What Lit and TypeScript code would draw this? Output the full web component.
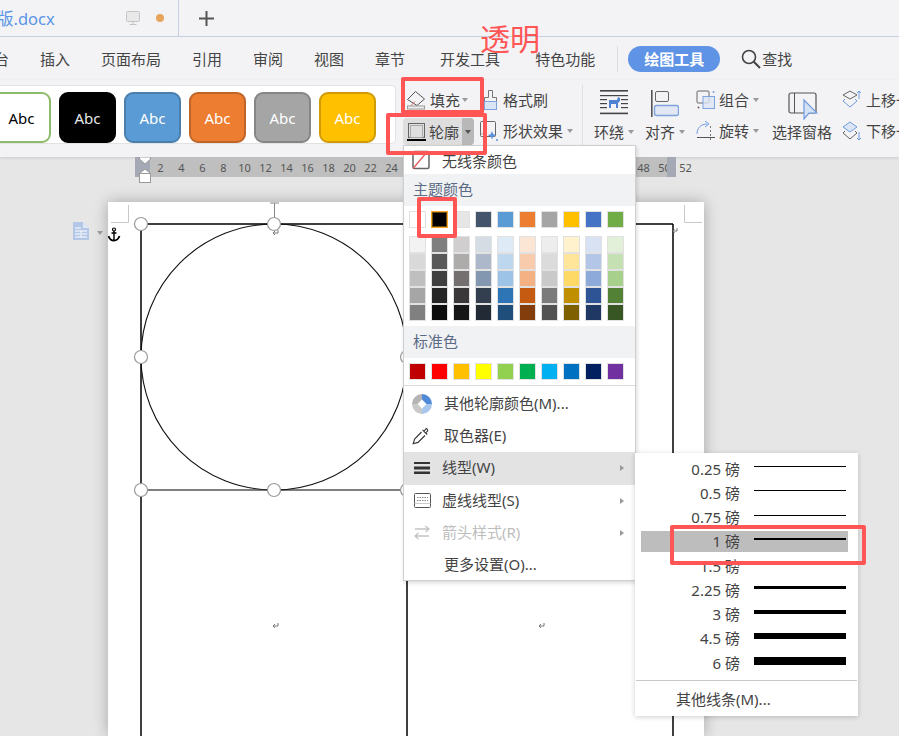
import { LitElement, html, svg, css } from "lit";
import { customElement } from "lit/decorators.js";

const THEME = ["#ffffff", "#000000", "#e7e6e6", "#44546a", "#5b9bd5", "#ed7d31", "#a5a5a5", "#ffc000", "#4472c4", "#70ad47"];
const SHADES = [
  ["#f2f2f2", "#7f7f7f", "#d0cece", "#d6dce4", "#deebf6", "#fbe5d5", "#ededed", "#fff2cc", "#d9e2f3", "#e2efd9"],
  ["#d9d9d9", "#595959", "#aeabab", "#adb9ca", "#bdd7ee", "#f7cbac", "#dbdbdb", "#fee599", "#b4c6e7", "#c5e0b3"],
  ["#bfbfbf", "#404040", "#757070", "#8497b0", "#9dc3e6", "#f4b183", "#c9c9c9", "#ffd965", "#8eaadb", "#a8d08d"],
  ["#a6a6a6", "#262626", "#3a3838", "#333f4f", "#2e75b5", "#c55a11", "#7b7b7b", "#bf8f00", "#2f5496", "#538135"],
  ["#808080", "#0d0d0d", "#161616", "#222a35", "#1e4e79", "#833c0b", "#525252", "#7f6000", "#1f3864", "#375623"],
];
const STANDARD = ["#c00000", "#ff0000", "#ffc000", "#ffff00", "#92d050", "#00b050", "#00b0f0", "#0070c0", "#002060", "#7030a0"];
const WEIGHTS = [
  { label: "0.25 磅", h: 1 },
  { label: "0.5 磅", h: 1 },
  { label: "0.75 磅", h: 1 },
  { label: "1 磅", h: 2 },
  { label: "1.5 磅", h: 2 },
  { label: "2.25 磅", h: 3 },
  { label: "3 磅", h: 4 },
  { label: "4.5 磅", h: 6 },
  { label: "6 磅", h: 8 },
];
const CARDS = [
  { fill: "#ffffff", edge: "#8cbb6a", text: "#000000" },
  { fill: "#000000", edge: "#000000", text: "#e8e8e8" },
  { fill: "#5b9bd5", edge: "#4a7ead", text: "#ffffff" },
  { fill: "#ed7d31", edge: "#bf652a", text: "#ffffff" },
  { fill: "#a5a5a5", edge: "#868686", text: "#ffffff" },
  { fill: "#ffc000", edge: "#cf9c05", text: "#ffffff" },
];
const RULER = Array.from({ length: 26 }, (_, i) => (i + 1) * 2);

const caret = html`<span class="caret"></span>`;

const icons = {
  fill: html`<svg width="20" height="20" viewBox="0 0 20 20" fill="none"><path d="M9.500 1.500L18.500 9l-7.500 6.500L1.500 9.500z" stroke="#555"/><path d="M4 16.500l5-5" stroke="#e46a6a"/><rect x="1.500" y="16" width="17" height="3" fill="#efefef" stroke="#999"/></svg>`,
  painter: html`<svg width="15" height="22" viewBox="0 0 15 22" fill="none"><path d="M5.500 1.500h4v7h4v4h-12v-4h4z" stroke="#777"/><rect x="1.500" y="12.500" width="12" height="8" fill="#d9e4f5" stroke="#7fa3dd"/></svg>`,
  outline: html`<svg width="19" height="20" viewBox="0 0 19 20" fill="none"><rect x="1.500" y="1.500" width="16" height="14" stroke="#666"/><rect x="3.500" y="3.500" width="12" height="12" stroke="#aaa"/><rect x="0" y="17" width="19" height="2" fill="#000"/></svg>`,
  effect: html`<svg width="20" height="22" viewBox="0 0 20 22" fill="none"><rect x="1.500" y="1.500" width="15" height="15" rx="1" stroke="#666"/><path d="M2 15l6-7" stroke="#bbb"/><path d="M13 11l1.200 3 3 1.200-3 1.200-1.200 3-1.200-3-3-1.200 3-1.200z" fill="#5f93e0"/><circle cx="5" cy="19" r="1.200" fill="#5f93e0"/><circle cx="18" cy="20" r="1" fill="#5f93e0"/></svg>`,
  wrap: html`<svg width="28" height="25" viewBox="0 0 28 25"><g fill="#444"><rect x="0" y="0" width="28" height="1.600"/><rect x="0" y="5" width="28" height="1.200"/><rect x="0" y="9" width="7" height="1.200"/><rect x="21" y="9" width="7" height="1.200"/><rect x="0" y="13" width="7" height="1.200"/><rect x="21" y="13" width="7" height="1.200"/><rect x="0" y="17" width="7" height="1.200"/><rect x="21" y="17" width="7" height="1.200"/><rect x="0" y="22.600" width="28" height="1.600"/></g><path d="M9 10h8l1-3 2 1v3l-2 2v5h-2v-4h-5v4H9z" fill="#4f83d1"/></svg>`,
  align: html`<svg width="28" height="28" viewBox="0 0 28 28" fill="none"><rect x="0" y="0" width="1.600" height="27" fill="#555"/><rect x="4.500" y="1.500" width="13" height="10" rx="1.500" stroke="#666"/><rect x="3.500" y="15.500" width="24" height="10" rx="2" fill="#e1e8f4" stroke="#7fa3dd" stroke-width="1.400"/></svg>`,
  group: html`<svg width="20" height="20" viewBox="0 0 20 20" fill="none"><rect x="1" y="1" width="12" height="12" rx="1" stroke="#666"/><rect x="7" y="6.500" width="11.500" height="12" fill="#dbe5f5" fill-opacity=".8" stroke="#7fa3dd"/><circle cx="17.500" cy="2" r="1" fill="#7fa3dd"/><circle cx="2.500" cy="17.500" r="1" fill="#666"/></svg>`,
  rotate: html`<svg width="20" height="20" viewBox="0 0 20 20" fill="none"><path d="M1 13C1 7 5 3 11 3" stroke="#6f9be0"/><path d="M9 0l4 3-4 3" stroke="#6f9be0"/><path d="M1 16.500h18" stroke="#555"/><path d="M14.500 5v15" stroke="#777" stroke-dasharray="2 2"/></svg>`,
  pane: html`<svg width="30" height="28" viewBox="0 0 30 28" fill="none"><rect x="1" y="1" width="27" height="20" rx="2" stroke="#555" stroke-width="1.200"/><path d="M6.500 1v20" stroke="#555"/><path d="M16 8v19l5-6h8z" fill="#d5e2f6" stroke="#6f9be0" stroke-width="1.200"/></svg>`,
  up: html`<svg width="20" height="20" viewBox="0 0 20 20" fill="none"><path d="M8 1l7 4-7 4-7-4z" stroke="#666"/><path d="M3 9l-2 2 7 6 7-6-2-2" stroke="#6f9be0"/><path d="M17 9V1m-2 2l2-2 2 2" stroke="#6f9be0"/></svg>`,
  down: html`<svg width="20" height="20" viewBox="0 0 20 20" fill="none"><path d="M8 1l7 5-7 5-7-5z" fill="#dbe5f5" stroke="#6f9be0"/><path d="M3 10l-2 2 7 6 7-6-2-2" stroke="#666"/><path d="M17 11v8m-2-2l2 2 2-2" stroke="#6f9be0"/></svg>`,
  search: html`<svg width="20" height="20" viewBox="0 0 20 20" fill="none"><circle cx="8" cy="8" r="6.500" stroke="#444" stroke-width="1.600"/><path d="M12.800 12.800L19 19" stroke="#444" stroke-width="2"/></svg>`,
  monitor: html`<svg width="14" height="15" viewBox="0 0 14 15" fill="none"><rect x=".5" y=".5" width="13" height="10" rx="1" fill="#e8e8e8" stroke="#c4c4c4"/><path d="M7 11v2M3.500 13.500h7" stroke="#c4c4c4"/></svg>`,
  plus: html`<svg width="15" height="15" viewBox="0 0 15 15"><path d="M6.500 0h2v6.500H15v2H8.500V15h-2V8.500H0v-2h6.500z" fill="#555"/></svg>`,
  noline: html`<svg width="18" height="20" viewBox="0 0 18 20" fill="none"><rect x="1" y="1.500" width="16" height="17" rx="1.500" stroke="#666" stroke-width="1.500"/><path d="M1 18.500L15 2" stroke="#e25a5a" stroke-width="1.300"/></svg>`,
  wheel: html`<svg width="20" height="20" viewBox="0 0 20 20"><path d="M10 0a10 10 0 0 1 10 10h-5.500L10 5.500z" fill="#4f8ad8"/><path d="M20 10a10 10 0 0 1-10 10v-5.500l4.500-4.500z" fill="#a9c6ec"/><path d="M10 20A10 10 0 0 1 0 10h5.500l4.500 4.500z" fill="#c9c9c9"/><path d="M0 10A10 10 0 0 1 10 0v5.500L5.500 10z" fill="#b4b4b4"/></svg>`,
  dropper: html`<svg width="18" height="18" viewBox="0 0 18 18" fill="none" stroke="#333" stroke-width="1.100"><path d="M10.500 2.800l4.700 4.700M12 4.300l1.700-2.300c1-.9 2.300.4 1.900 1.900L13.700 6"/><path d="M9.500 5L2.600 12 1.200 16.800 6 15.400 13 8.500"/></svg>`,
  weight: html`<svg width="16" height="12" viewBox="0 0 16 12"><rect y="0" width="16" height="2" fill="#333"/><rect y="4.500" width="16" height="3" fill="#333"/><rect y="9.500" width="16" height="2.500" fill="#333"/></svg>`,
  dash: html`<svg width="17" height="15" viewBox="0 0 17 15" fill="none"><rect x=".5" y=".5" width="16" height="14" rx="1" stroke="#555"/><path d="M3 4.500h11M3 7.500h11" stroke="#888" stroke-dasharray="1.500 1"/><path d="M.5 10.500h16" stroke="#ccc"/></svg>`,
  arrows: html`<svg width="16" height="15" viewBox="0 0 16 15" fill="none" stroke="#c4c4c4" stroke-width="1.300"><path d="M1 4h14M11.500 1L15 4 11.500 7"/><path d="M15 11H1M4.500 8L1 11l3.500 3"/></svg>`,
  doc: html`<svg width="16" height="18" viewBox="0 0 16 18"><path d="M0 0h10l6 6v12H0z" fill="#b4c7e7"/><path d="M10 0v6h6" fill="#dfe8f6"/><path d="M2 6h6M2 9h12M2 12h5M9 12h5M2 15h12M8 9v6" stroke="#fff"/></svg>`,
  marker: html`<svg width="12" height="26" viewBox="0 0 12 26"><path d="M.5 0h11v2L6 7 .5 2z" fill="#fff" stroke="#999"/><path d="M6 12l5.500 4.500H.5z" fill="#fff" stroke="#999"/><rect x=".5" y="16.500" width="11" height="9" fill="#fff" stroke="#999"/></svg>`,
};

@customElement("app-root")
export class AppRoot extends LitElement {
  static styles = css`
    :host {
      display: block;
      position: relative;
      width: 899px;
      height: 736px;
      overflow: hidden;
      background: #e6e6e6;
      color: #444;
      font: 15px "Noto Sans", "Noto Sans CJK SC", sans-serif;
    }

    svg {
      display: block;
      flex: none;
    }

    /* title tabs */
    .tabs {
      display: flex;
      height: 36px;
      background: #f3f3f5;
      border-bottom: 1px solid #c5d0e0;
    }
    .tab {
      display: flex;
      align-items: center;
      width: 178px;
      border-right: 1px solid #c5d0e0;
      overflow: hidden;
      flex: none;
    }
    .tab-name {
      margin-left: -3px;
      width: 129px;
      color: #5b95e6;
      font-size: 16.500px;
      white-space: nowrap;
    }
    .tab-dot {
      width: 8px;
      height: 8px;
      margin-left: 16px;
      border-radius: 50%;
      background: #e8a35d;
    }
    .add {
      margin: 1px 0 0 20px;
      align-self: center;
    }

    /* menu row */
    .menubar {
      display: flex;
      align-items: center;
      gap: 31px;
      height: 43px;
      margin-left: -6px;
      background: #f3f3f5;
      white-space: nowrap;
    }
    .menubar .wide {
      margin-left: 4px;
    }
    .menu-rule {
      width: 1px;
      height: 26px;
      margin: 0 -21px 0 -9px;
      background: #dcdcdc;
    }
    .pill {
      padding: 0 16px;
      height: 26px;
      line-height: 26px;
      border-radius: 13px;
      background: #5f93e6;
      color: #fff;
      font-weight: 700;
    }
    .find {
      display: flex;
      align-items: center;
      gap: 1px;
      margin-left: -10px;
    }

    /* ribbon */
    .ribbon {
      position: relative;
      display: flex;
      height: 77px;
      padding-top: 5px;
      box-sizing: border-box;
      background: #f3f3f5;
      box-shadow: 0 1px 3px rgba(0, 0, 0, 0.12);
      white-space: nowrap;
    }
    .gallery {
      display: flex;
      gap: 8px;
      flex: none;
      box-sizing: border-box;
      width: 404px;
      height: 59px;
      margin-left: -8px;
      padding-top: 6px;
      background: #fff;
      border: 1px solid #e2e2e2;
      border-left: 0;
      border-radius: 0 5px 5px 0;
    }
    .card {
      display: flex;
      align-items: center;
      justify-content: center;
      box-sizing: border-box;
      width: 57px;
      height: 51px;
      border: 2px solid;
      border-radius: 9px;
      font-size: 15px;
    }
    .card:first-child {
      width: 59px;
    }
    .gallery-more {
      width: 6px;
      height: 1px;
      margin: 24px 0 0 2px;
      background: #888;
    }
    .small-tools {
      display: grid;
      grid-template-columns: 80px 99px;
      grid-template-rows: 31px 31px;
      flex: none;
      margin: -1px 0 0 7px;
    }
    .tool {
      display: flex;
      align-items: center;
      gap: 5px;
    }
    .caret {
      display: inline-block;
      flex: none;
      width: 0;
      height: 0;
      margin-left: 4px;
      border: 3.500px solid transparent;
      border-top: 4px solid #999;
      border-bottom: 0;
    }
    .tool .caret {
      margin-left: -2px;
    }
    .fill-tool {
      padding-left: 3px;
      gap: 4px;
    }
    .outline-tool {
      align-self: center;
      box-sizing: border-box;
      width: 71px;
      height: 27px;
      margin-top: 2px;
      padding-left: 4px;
      gap: 3px;
      border-radius: 4px;
      background: #dedede;
    }
    .outline-tool .more {
      display: flex;
      align-items: center;
      justify-content: center;
      align-self: stretch;
      width: 13px;
      margin-left: auto;
      border-radius: 0 4px 4px 0;
      background: #b8b8b8;
    }
    .outline-tool .caret {
      margin: 0;
      border-top-color: #555;
    }
    .effect-tool {
      margin-left: -4px;
      gap: 4px;
    }
    .effect-tool .caret {
      margin-left: 0;
    }
    .big-tools {
      display: flex;
      flex: none;
      border-left: 1px solid #e0e0e0;
      height: 62px;
      padding-left: 11px;
    }
    .big {
      display: flex;
      flex-direction: column;
      align-items: flex-start;
      flex: none;
      width: 51px;
      height: 62px;
    }
    .big-icon {
      height: 35px;
      margin-left: 6px;
      padding-top: 5px;
      box-sizing: border-box;
    }
    .big-label {
      display: flex;
      align-items: center;
      height: 23px;
    }
    .pair {
      display: grid;
      grid-template-rows: 31px 31px;
      flex: none;
      width: 76px;
      margin-top: -1px;
    }
    .pair .tool {
      gap: 3px;
    }
    .pair .caret {
      margin-left: 1px;
    }
    .pane {
      flex: none;
      width: 70px;
      display: flex;
      flex-direction: column;
      align-items: flex-start;
    }
    .pane .big-icon {
      margin-left: 16px;
      padding-top: 7px;
    }
    .moves {
      display: grid;
      grid-template-rows: 31px 31px;
      margin-top: -1px;
    }
    .moves .tool {
      gap: 4px;
    }

    /* ruler and document */
    .ruler {
      position: relative;
      display: flex;
      align-items: center;
      box-sizing: border-box;
      width: 560px;
      height: 20px;
      margin-left: 135px;
      padding-left: 15px;
      background: linear-gradient(90deg, #a5a9b5 0 15px, #bfbfbf 15px 541px, transparent 541px);
      font-size: 11px;
      color: #555;
    }
    .ruler::after {
      content: "";
      position: absolute;
      left: 532px;
      top: 0;
      width: 9px;
      height: 20px;
      background: #a5a9b5;
    }
    .ruler span {
      flex: none;
      width: 21px;
      text-align: center;
    }
    .marker {
      position: absolute;
      left: 4px;
      top: 0;
    }
    .page {
      width: 596px;
      height: 534px;
      margin: 25px 0 0 108px;
      background: #fff;
      box-shadow: 0 0 14px rgba(0, 0, 0, 0.28);
    }
    .doc-btn {
      position: absolute;
      left: 73px;
      top: 222px;
      display: flex;
      align-items: center;
      gap: 8px;
    }
    .doc-btn .caret {
      margin: 4px 0 0 0;
    }

    /* outline dropdown */
    .dropdown {
      position: absolute;
      left: 403px;
      top: 145px;
      box-sizing: border-box;
      width: 233px;
      height: 436px;
      background: #fff;
      border: 1px solid #cfcfcf;
      box-shadow: 1px 2px 4px rgba(0, 0, 0, 0.15);
      white-space: nowrap;
    }
    .no-line {
      display: flex;
      align-items: center;
      gap: 12px;
      height: 28px;
      padding-left: 8px;
    }
    .section {
      display: flex;
      align-items: center;
      box-sizing: border-box;
      height: 32px;
      padding: 0 0 3px 9px;
      background: #f1f2f4;
      color: #5c6b85;
    }
    .section.std {
      margin-top: 5px;
    }
    .swatches {
      display: grid;
      grid-template-columns: repeat(10, 17px);
      column-gap: 5px;
      padding-left: 5px;
    }
    .swatch {
      box-sizing: border-box;
      height: 17px;
      border: 1px solid #e1e1e1;
    }
    .swatch.picked {
      border-color: #f5a623;
      box-shadow: inset 0 0 0 1px rgba(245, 166, 35, 0.45);
    }
    .theme {
      margin-top: 5px;
    }
    .shades {
      margin-top: 8px;
    }
    .standard {
      margin-top: 5px;
    }
    .rule {
      height: 1px;
      background: #d9d9d9;
    }
    .dropdown .rule {
      margin: 5px 0 2px;
    }
    .item {
      display: flex;
      align-items: center;
      box-sizing: border-box;
      height: 32.200px;
      padding: 0 0 3px 8px;
    }
    .item .slot {
      display: flex;
      align-items: center;
      flex: none;
      width: 32px;
    }
    .item .slot svg {
      margin-top: 3px;
    }
    .item.tight .slot {
      width: 30px;
      padding-left: 2px;
      box-sizing: border-box;
    }
    .item.plain {
      padding-left: 40px;
    }
    .item.active {
      background: #e3e3e3;
    }
    .item.off {
      color: #bdbdbd;
    }
    .chev {
      margin: 3px 11px 0 auto;
      width: 0;
      height: 0;
      border: 3.500px solid transparent;
      border-left: 4px solid #999;
      border-right: 0;
    }

    /* line weight submenu */
    .weights {
      position: absolute;
      left: 635px;
      top: 453px;
      box-sizing: border-box;
      width: 223px;
      height: 263px;
      padding-top: 4px;
      background: #fff;
      box-shadow: 0 1px 5px rgba(0, 0, 0, 0.2);
      white-space: nowrap;
    }
    .weight {
      display: flex;
      align-items: center;
      gap: 14px;
      height: 24.250px;
      margin: 0 10px 0 6px;
    }
    .weight.on {
      background: linear-gradient(#bdbdbd, #bdbdbd) 0 50% / 100% 21px no-repeat;
    }
    .weight-name {
      width: 99px;
      margin-bottom: 2px;
      text-align: right;
    }
    .weight-line {
      width: 92px;
      margin-bottom: 5px;
      background: #000;
    }
    .weights .rule {
      margin: 5px 1px 0;
      background: #c8c8c8;
    }
    .weights-more {
      padding: 7px 0 0 41px;
    }

    /* red annotations drawn over the screenshot */
    .mark {
      position: absolute;
      box-sizing: border-box;
      border: 4px solid #ff5555;
      border-radius: 2px;
    }
    .mark.fill {
      left: 401px;
      top: 77px;
      width: 83px;
      height: 37px;
    }
    .mark.outline {
      left: 386px;
      top: 113px;
      width: 101px;
      height: 42px;
    }
    .mark.black {
      left: 417px;
      top: 197px;
      width: 40px;
      height: 41px;
    }
    .mark.weight-mark {
      left: 670px;
      top: 525px;
      width: 196px;
      height: 40px;
    }
    .note {
      position: absolute;
      left: 480px;
      top: 18px;
      color: #ff5555;
      font-size: 30px;
      line-height: 42px;
    }
  `;

  render() {
    const handles = [
      [141, 224], [274, 224], [141, 357], [407, 357], [141, 490], [274, 490], [407, 490],
    ];
    return html`
      <div class="tabs">
        <div class="tab">
          <span class="tab-name">版.docx</span>
          ${icons.monitor}
          <span class="tab-dot"></span>
        </div>
        <div class="add">${icons.plus}</div>
      </div>

      <div class="menubar">
        <span>台</span>
        <span>插入</span>
        <span>页面布局</span>
        <span>引用</span>
        <span>审阅</span>
        <span>视图</span>
        <span>章节</span>
        <span class="wide">开发工具</span>
        <span class="wide">特色功能</span>
        <span class="menu-rule"></span>
        <span class="pill">绘图工具</span>
        <span class="find">${icons.search}查找</span>
      </div>

      <div class="ribbon">
        <div class="gallery">
          ${CARDS.map(
            (c) => html`<div class="card" style="background:${c.fill};border-color:${c.edge};color:${c.text}">Abc</div>`
          )}
          <span class="gallery-more"></span>
        </div>
        <div class="small-tools">
          <div class="tool fill-tool">${icons.fill}填充${caret}</div>
          <div class="tool">${icons.painter}格式刷</div>
          <div class="tool outline-tool">
            ${icons.outline}轮廓
            <span class="more">${caret}</span>
          </div>
          <div class="tool effect-tool">${icons.effect}形状效果${caret}</div>
        </div>
        <div class="big-tools">
          <div class="big">
            <div class="big-icon">${icons.wrap}</div>
            <div class="big-label">环绕${caret}</div>
          </div>
          <div class="big">
            <div class="big-icon">${icons.align}</div>
            <div class="big-label">对齐${caret}</div>
          </div>
          <div class="pair">
            <div class="tool">${icons.group}组合${caret}</div>
            <div class="tool">${icons.rotate}旋转${caret}</div>
          </div>
          <div class="pane">
            <div class="big-icon">${icons.pane}</div>
            <div class="big-label">选择窗格</div>
          </div>
          <div class="moves">
            <div class="tool">${icons.up}上移一层</div>
            <div class="tool">${icons.down}下移一层</div>
          </div>
        </div>
      </div>

      <div class="ruler">
        ${RULER.map((n) => html`<span>${n}</span>`)}
        <div class="marker">${icons.marker}</div>
      </div>

      <div class="page">
        <svg width="596" height="534" viewBox="108 202 596 534" fill="none">
          <path d="M128.500 205v17.500H111M684.500 205v17.500H702" stroke="#c8c8c8" />
          <path d="M141 224h532M141 224v512M407 490v246M673 224v512" stroke="#000" stroke-width="1.500" />
          <path d="M141 490h532" stroke="#000" stroke-width="1.200" />
          <circle cx="274" cy="357" r="133" stroke="#111" stroke-width="1.100" />
          <path d="M274.500 203v15M270 203h9" stroke="#888" />
          ${handles.map(
            ([x, y]) => svg`<circle cx=${x} cy=${y} r="6.500" fill="#fff" stroke="#999" stroke-width="1.200" />`
          )}
          <g stroke="#777" stroke-width="1">
            <path d="M278 230v3h-5m2-2l-2 2 2 2" />
            <path d="M278 623v3h-5m2-2l-2 2 2 2" />
            <path d="M544 623v3h-5m2-2l-2 2 2 2" />
            <path d="M677 228v3h-4m1.500-2l-1.500 2 1.500 2" />
          </g>
          <g stroke="#000">
            <circle cx="114" cy="229.500" r="1.500" stroke-width="1.200" />
            <path d="M114 231v9.500M111.500 233h5" stroke-width="1.400" />
            <path d="M108.500 236c1 3 3 4.500 5.500 4.500s4.500-1.500 5.500-4.500" stroke-width="1.800" />
          </g>
        </svg>
      </div>
      <div class="doc-btn">${icons.doc}${caret}</div>

      <div class="dropdown">
        <div class="no-line">${icons.noline}无线条颜色</div>
        <div class="section">主题颜色</div>
        <div class="swatches theme">
          ${THEME.map(
            (c, i) => html`<div class="swatch ${i === 1 ? "picked" : ""}" style="background:${c}"></div>`
          )}
        </div>
        <div class="swatches shades">
          ${SHADES.flat().map((c) => html`<div class="swatch" style="background:${c}"></div>`)}
        </div>
        <div class="section std">标准色</div>
        <div class="swatches standard">
          ${STANDARD.map((c) => html`<div class="swatch" style="background:${c}"></div>`)}
        </div>
        <div class="rule"></div>
        <div class="item"><span class="slot">${icons.wheel}</span>其他轮廓颜色(M)...</div>
        <div class="item"><span class="slot">${icons.dropper}</span>取色器(E)</div>
        <div class="item tight active"><span class="slot">${icons.weight}</span>线型(W)<span class="chev"></span></div>
        <div class="item tight"><span class="slot">${icons.dash}</span>虚线线型(S)<span class="chev"></span></div>
        <div class="item tight off"><span class="slot">${icons.arrows}</span>箭头样式(R)<span class="chev"></span></div>
        <div class="item plain">更多设置(O)...</div>
      </div>

      <div class="weights">
        ${WEIGHTS.map(
          (w, i) => html`
            <div class="weight ${i === 3 ? "on" : ""}">
              <span class="weight-name">${w.label}</span>
              <span class="weight-line" style="height:${w.h}px"></span>
            </div>
          `
        )}
        <div class="rule"></div>
        <div class="weights-more">其他线条(M)...</div>
      </div>

      <div class="note">透明</div>
      <div class="mark fill"></div>
      <div class="mark outline"></div>
      <div class="mark black"></div>
      <div class="mark weight-mark"></div>
    `;
  }
}
